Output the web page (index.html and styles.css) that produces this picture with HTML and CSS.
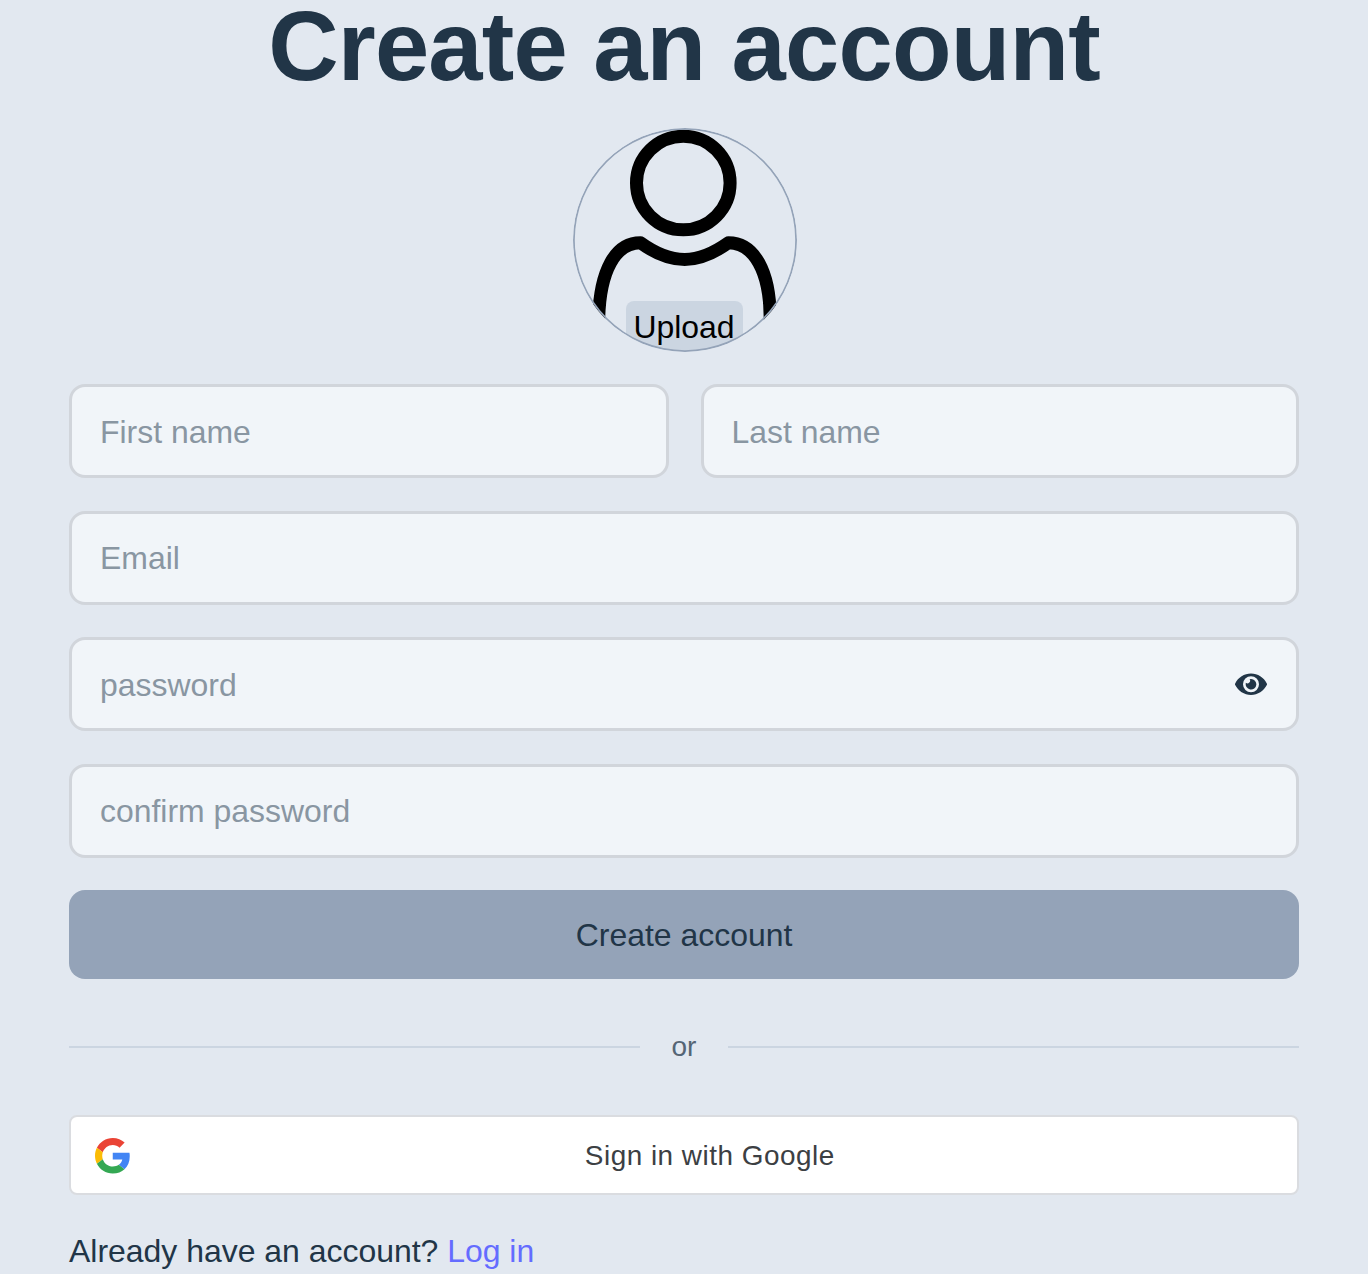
FILE: index.html
```html
<!DOCTYPE html>
<html lang="en">
<head>
  <meta charset="utf-8">
  <title>Create an account</title>
  <link rel="stylesheet" href="styles.css">
</head>
<body>
  <main class="signup">
    <h1 class="title">Create an account</h1>
    <form class="form">
      <label class="avatar">
        <svg class="avatar-icon" viewBox="0 0 224 224" fill="none" stroke="#000" stroke-width="13" stroke-linejoin="round">
          <circle cx="110.3" cy="55" r="46.8"/>
          <path d="M25.700 204V190C27 143 42 114.800 67.500 114.800C83 126 97 131.500 111.700 131.500C127 131.500 141 125 155.400 114.800C181 114.800 197 143 197.200 190V204"/>
        </svg>
        <span class="upload">Upload</span>
      </label>
      <div class="names">
        <input class="field" type="text" placeholder="First name">
        <input class="field" type="text" placeholder="Last name">
      </div>
      <input class="field" type="email" placeholder="Email">
      <div class="password">
        <input class="field" type="password" placeholder="password">
        <svg class="eye" viewBox="0 0 576 512" fill="#213547"><path d="M572.5 241.4C518.3 135.6 410.9 64 288 64S57.7 135.6 3.500 241.400a32.400 32.400 0 0 0 0 29.200C57.700 376.400 165.100 448 288 448s230.300-71.600 284.500-177.400a32.400 32.400 0 0 0 0-29.200zM288 400a144 144 0 1 1 144-144 143.900 143.900 0 0 1-144 144zm0-240a95.300 95.300 0 0 0-25.300 3.800 47.900 47.900 0 0 1-66.900 66.900A95.800 95.800 0 1 0 288 160z"/></svg>
      </div>
      <input class="field" type="password" placeholder="confirm password">
      <button class="submit" type="button">Create account</button>
    </form>
    <div class="divider"><span class="divider-text">or</span></div>
    <button class="google" type="button">
      <svg class="google-logo" viewBox="0 0 48 48">
        <path fill="#EA4335" d="M24 9.500c3.540 0 6.710 1.220 9.210 3.600l6.850-6.850C35.900 2.380 30.470 0 24 0 14.620 0 6.510 5.380 2.560 13.220l7.980 6.190C12.430 13.720 17.740 9.500 24 9.500z"/>
        <path fill="#4285F4" d="M46.980 24.550c0-1.570-.15-3.090-.38-4.550H24v9.020h12.940c-.58 2.960-2.260 5.480-4.780 7.180l7.730 6c4.510-4.180 7.090-10.360 7.090-17.650z"/>
        <path fill="#FBBC05" d="M10.530 28.590c-.48-1.450-.76-2.990-.76-4.590s.27-3.140.76-4.590l-7.980-6.190C.92 16.460 0 20.120 0 24c0 3.880.92 7.540 2.560 10.780l7.970-6.190z"/>
        <path fill="#34A853" d="M24 48c6.480 0 11.930-2.130 15.890-5.810l-7.730-6c-2.150 1.450-4.920 2.300-8.160 2.300-6.260 0-11.570-4.220-13.470-9.910l-7.980 6.190C6.510 42.620 14.620 48 24 48z"/>
      </svg>
      <span class="google-text">Sign in with Google</span>
    </button>
    <p class="login">Already have an account? <a class="login-link" href="#">Log in</a></p>
  </main>
</body>
</html>
```
FILE: styles.css
```css
* {
  box-sizing: border-box;
}

body {
  margin: 0;
  background: #e2e8f0;
  color: #213547;
  font: 31.95px/47px "Liberation Sans", Arial, sans-serif;
}

.signup {
  width: 1230px;
  margin: 0 auto;
  display: flex;
  flex-direction: column;
}

.title {
  margin: 0;
  font-size: 97.5px;
  line-height: 94px;
  letter-spacing: -0.8px;
  font-weight: 700;
  text-align: center;
  white-space: nowrap;
}

.form {
  display: flex;
  flex-direction: column;
  align-items: stretch;
  margin-top: 34px;
  gap: 32.4px;
}

.avatar {
  position: relative;
  align-self: center;
  width: 224px;
  height: 224px;
  margin-left: 2px;
  border-radius: 50%;
  overflow: hidden;
}

.avatar-icon {
  display: block;
  width: 224px;
  height: 224px;
}

.avatar::after {
  content: "";
  position: absolute;
  inset: 0;
  border-radius: 50%;
  box-shadow: inset 0 0 0 1.8px #94a3b8;
}

.upload {
  position: absolute;
  left: 52.5px;
  top: 173px;
  width: 117px;
  height: 55px;
  padding-top: 3px;
  border-radius: 8px;
  background: #cbd5e1;
  color: #000;
  text-align: center;
}

.names {
  display: grid;
  grid-template-columns: 599.5px 1fr;
  gap: 32px;
}

.field {
  display: block;
  width: 100%;
  height: 94px;
  padding: 2px 28px 0;
  border: 3px solid #d1d5db;
  border-radius: 16px;
  background: #f1f5f9;
  color: inherit;
  font: inherit;
}

.field::placeholder {
  color: #8996a2;
  opacity: 1;
}

.password {
  position: relative;
}

.eye {
  position: absolute;
  right: 32px;
  top: 33px;
  width: 32px;
  height: 28.5px;
}

.submit {
  height: 89.5px;
  padding: 2px 0 0;
  border: 0;
  border-radius: 16px;
  background: #94a3b8;
  color: inherit;
  font: inherit;
}

.divider {
  display: flex;
  align-items: center;
  gap: 31.5px;
  height: 42px;
  margin-top: 47px;
  color: #556575;
  font-size: 28px;
}

.divider-text {
  padding-bottom: 2px;
}

.divider::before,
.divider::after {
  content: "";
  flex: 1;
  height: 2px;
  background: #cbd5e1;
}

.google {
  display: flex;
  align-items: center;
  height: 80px;
  margin-top: 47px;
  padding: 1px 24px 0;
  border: 2px solid #dadce0;
  border-radius: 8px;
  background: #fff;
  color: #3c4043;
  font: 27.9px "Liberation Sans", Arial, sans-serif;
  letter-spacing: 0.5px;
}

.google-logo {
  width: 35.5px;
  height: 35.5px;
}

.google-text {
  flex: 1;
  padding-left: 16px;
  text-align: center;
}

.login {
  margin: 33px 0 0;
}

.login-link {
  color: #646cff;
  text-decoration: none;
}
```
